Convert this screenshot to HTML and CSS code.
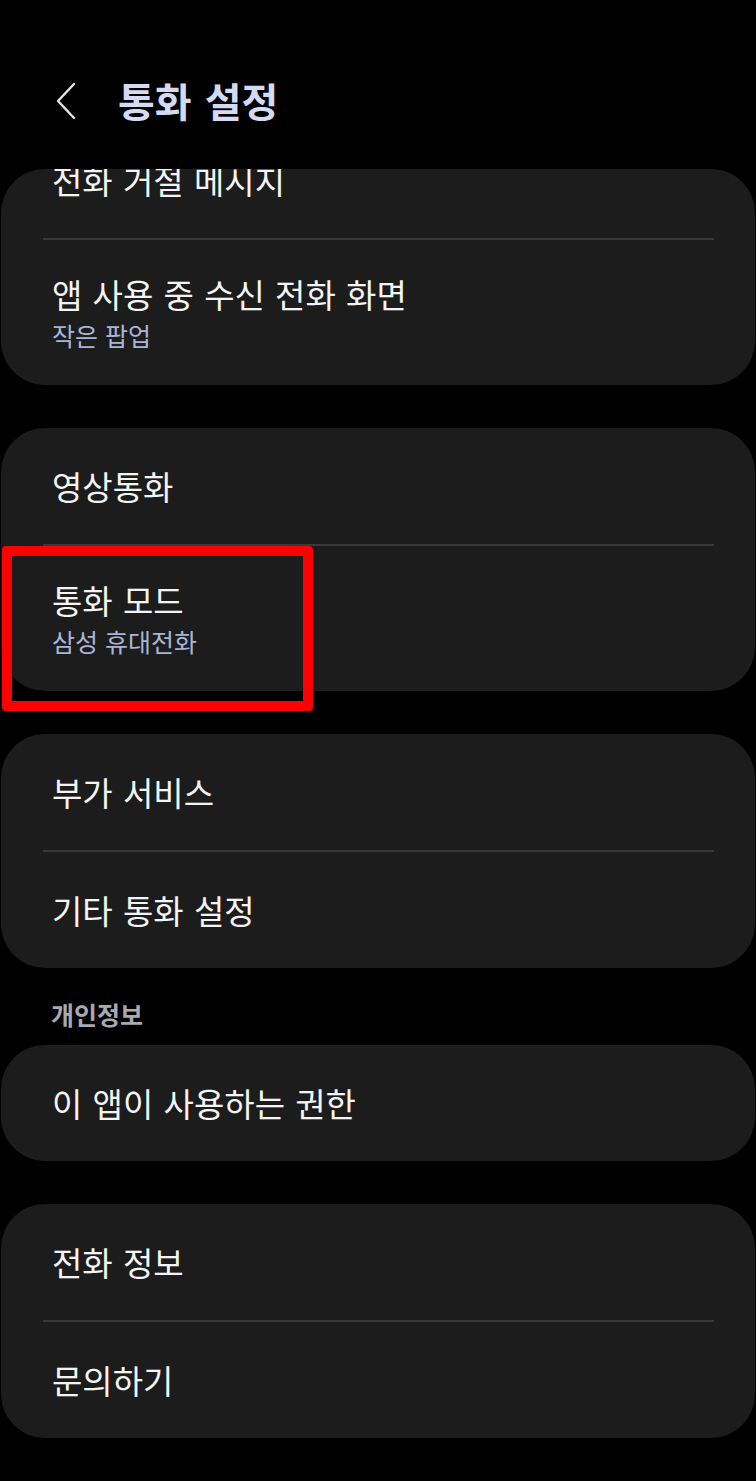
FILE: index.html
```html
<!DOCTYPE html>
<html lang="ko">
<head>
    <meta charset="UTF-8">
    <meta name="viewport" content="width=device-width, initial-scale=1.0">
    <title>통화 설정</title>
    <link rel="stylesheet" href="styles.css">
</head>
<body>
    <div class="header">
        <svg class="back" width="24" height="40" viewBox="0 0 24 40">
            <polyline points="20,3 4,20 20,37" fill="none" stroke="#e4e4e8" stroke-width="2.4" stroke-linecap="round" stroke-linejoin="round"/>
        </svg>
        <h1>통화 설정</h1>
    </div>

    <div class="card">
        <div class="row scrolled">
            <div class="title">전화 거절 메시지</div>
        </div>
        <div class="row double">
            <div class="title">앱 사용 중 수신 전화 화면</div>
            <div class="sub">작은 팝업</div>
        </div>
    </div>

    <div class="card">
        <div class="row">
            <div class="title">영상통화</div>
        </div>
        <div class="row double">
            <div class="title">통화 모드</div>
            <div class="sub">삼성 휴대전화</div>
        </div>
    </div>

    <div class="card">
        <div class="row">
            <div class="title">부가 서비스</div>
        </div>
        <div class="row">
            <div class="title">기타 통화 설정</div>
        </div>
    </div>

    <div class="section-label">개인정보</div>

    <div class="card">
        <div class="row">
            <div class="title">이 앱이 사용하는 권한</div>
        </div>
    </div>

    <div class="card">
        <div class="row">
            <div class="title">전화 정보</div>
        </div>
        <div class="row">
            <div class="title">문의하기</div>
        </div>
    </div>

    <div class="highlight"></div>
</body>
</html>
```

FILE: styles.css
```css
body {
    margin: 0;
    background-color: #000000;
    font-family: "Noto Sans CJK KR", "Noto Sans", sans-serif;
    color: #f4f4f4;
    position: relative;
    height: 1481px;
    overflow: hidden;
}
.header {
    height: 169px;
    box-sizing: border-box;
    padding: 77px 0 0 54px;
    display: flex;
    align-items: flex-start;
}
.back {
    margin-top: 4px;
}
.header h1 {
    margin: 0 0 0 40px;
    font-size: 40px;
    line-height: 46px;
    font-weight: bold;
    color: #d3daf2;
    word-spacing: 2px;
}
.card {
    margin: 0 1px 43px;
    background-color: #1c1c1c;
    border-radius: 44px;
    overflow: hidden;
}
.row {
    height: 116px;
    box-sizing: border-box;
    padding-left: 51px;
    display: flex;
    flex-direction: column;
    justify-content: center;
}
.row + .row {
    height: 118px;
    margin: 0 41px 0 42px;
    padding-left: 9px;
    border-top: 2px solid #383838;
}
.row.scrolled {
    margin-top: -47px;
}
.row.double {
    height: 147px;
    padding-bottom: 2px;
}
.title {
    font-size: 33px;
    line-height: 40px;
    word-spacing: 1px;
}
.sub {
    margin-top: 6px;
    font-size: 25px;
    line-height: 30px;
    color: #aab5d6;
}
.section-label {
    margin: -12px 0 16px;
    padding-left: 51px;
    font-size: 25px;
    line-height: 30px;
    font-weight: bold;
    color: #a9a9b1;
}
.highlight {
    position: absolute;
    left: 2px;
    top: 546px;
    width: 311px;
    height: 165px;
    box-sizing: border-box;
    border: 10px solid #ff0000;
    border-radius: 4px;
}
```
